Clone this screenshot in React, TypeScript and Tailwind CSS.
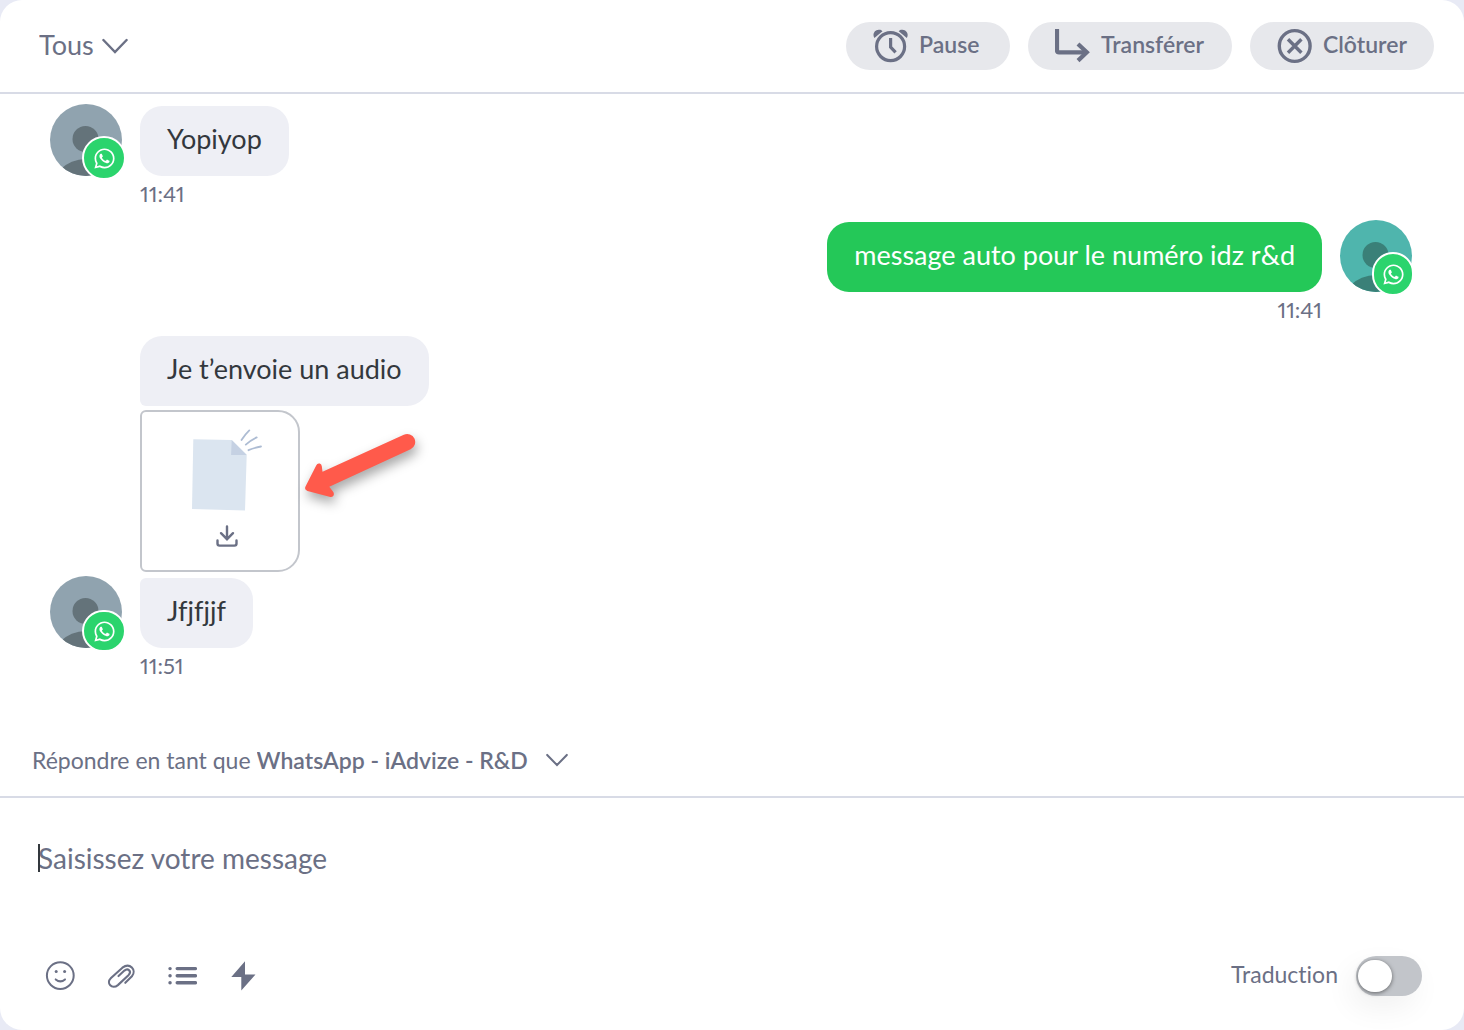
import type { ReactNode } from "react"
import { FaWhatsapp } from "react-icons/fa"

const actions = [
  { label: "Pause", icon: <AlarmIcon />, width: "w-[164px]" },
  { label: "Transférer", icon: <TransferIcon />, width: "w-[204px]" },
  { label: "Clôturer", icon: <CloseIcon />, width: "w-[184px]" },
]

const tools = [
  { label: "Emoji", icon: <SmileIcon /> },
  { label: "Pièce jointe", icon: <PaperclipIcon /> },
  { label: "Réponses", icon: <ListIcon /> },
  { label: "Raccourcis", icon: <BoltIcon /> },
]

function AlarmIcon() {
  return (
    <svg className="size-9 shrink-0" viewBox="0 0 36 36" fill="none" stroke="currentColor" strokeWidth="3.2">
      <circle cx="17.6" cy="18.6" r="14" />
      <path d="M17.6 10v9l5 5.3" />
      <path
        d="M1.4 9.9C-.9 6.3 1.4 2 5.7 1.8c1.8-.2 3.2.4 3.8 1.5zM33.8 9.9c2.2-3.6 0-7.9-4.3-8.1-1.8-.2-3.2.4-3.8 1.5z"
        fill="currentColor"
        stroke="none"
      />
    </svg>
  )
}

function TransferIcon() {
  return (
    <svg className="size-9 shrink-0" viewBox="2 0 36 36" fill="none" stroke="currentColor" strokeWidth="4.2">
      <path d="M4 1v21.3q0 2 2 2h28" />
      <path d="M25 16l8.8 8.3-8.8 8.3" />
    </svg>
  )
}

function CloseIcon() {
  return (
    <svg className="size-9 shrink-0" viewBox="0 0 36 36" fill="none" stroke="currentColor" strokeWidth="3.4">
      <circle cx="17.7" cy="18" r="15.4" />
      <path d="M11 11.2l13.4 13.6M24.4 11.2L11 24.8" />
    </svg>
  )
}

function SmileIcon() {
  return (
    <svg className="size-[30px]" viewBox="0 0 30 30" fill="none" stroke="currentColor" strokeWidth="2">
      <circle cx="15.3" cy="14.6" r="13.4" />
      <path d="M10.7 18.4q4.7 4 9.3 0" strokeLinecap="round" />
      <circle cx="11.2" cy="10.6" r="1.5" fill="currentColor" stroke="none" />
      <circle cx="19.6" cy="10.6" r="1.5" fill="currentColor" stroke="none" />
    </svg>
  )
}

function PaperclipIcon() {
  return (
    <svg className="size-[30px]" viewBox="0 0 30 30" fill="none" stroke="currentColor" strokeWidth="2.1" strokeLinecap="round">
      <path d="M19.3 21.8l6.6-6.5c5.1-6-2-14.4-9.5-8.6L5 16.9c-5.4 5.4 1.1 12 6.9 7.2l10.8-10.2c3.3-3.7-.8-7.3-4.3-4.3l-5.9 5.5" />
    </svg>
  )
}

function ListIcon() {
  return (
    <svg className="size-[30px]" viewBox="0 0 30 30" fill="none" stroke="currentColor" strokeWidth="3.4" strokeLinecap="round">
      <path d="M10.2 7.6h18.2M10.2 14.7h18.2M10.2 21.8h18.2M3 7.6h.1M3 14.7h.1M3 21.8h.1" />
    </svg>
  )
}

function BoltIcon() {
  return (
    <svg className="size-[30px]" viewBox="0 0 30 30" fill="currentColor">
      <path d="M17 .3L3.3 16h10v13.5L27.5 13.4H17z" />
    </svg>
  )
}

function DownloadIcon() {
  return (
    <svg className="size-[22px]" viewBox="0 0 22 22" fill="none" stroke="currentColor" strokeWidth="2.4" strokeLinecap="round">
      <path d="M11 1.4v12.2M5 8.2l6 6 6-6M1.5 15.4v3.2q0 2 2 2h15q2 0 2-2v-3.2" />
    </svg>
  )
}

function FileIcon() {
  return (
    <svg className="h-[84px] w-[74px]" viewBox="190 428 74 84">
      <path d="M193.3 439.2l38.4.8 15 14.8-1.7 55.7-53-1.5z" fill="#dbe5f0" />
      <path d="M231.7 440l15 15h-15.6z" fill="#c5d1e3" />
      <path
        d="M241.5 440q3.6-5.6 7.8-9.6M245.8 444.6q5-4.4 10.9-7.2M248.5 450.2q6-2.6 12.5-3.7"
        fill="none"
        stroke="#adbcd3"
        strokeWidth="1.8"
        strokeLinecap="round"
      />
    </svg>
  )
}

function RedArrow() {
  return (
    <svg className="absolute left-40 top-[15px] h-[90px] w-[130px] drop-shadow-[2px_6px_6px_rgba(0,0,0,0.35)]" viewBox="0 0 130 90">
      <path
        d="M5.5 61.5L16.2 40.5Q17.2 38 19.8 38.6Q21.6 39 21.8 41.3L22.5 46.8L103.8 9.7A8 8 0 0 1 110.6 24.2L29.3 61.8L33.3 67Q34.6 69.6 33 71.2Q31.8 72.4 29.4 71.8L7.5 66Q4 64.8 5.5 61.5Z"
        fill="#ff5a4b"
      />
    </svg>
  )
}

function Chevron({ className }: { className: string }) {
  return (
    <svg
      className={`pointer-events-none absolute right-0 ${className}`}
      viewBox="0 0 26 16"
      fill="none"
      stroke="currentColor"
      strokeWidth="2.4"
      strokeLinecap="round"
    >
      <path d="M1.4 2L13 14 24.6 2" />
    </svg>
  )
}

type AvatarProps = { color: string; shade: string; badge: string }

function Avatar({ color, shade, badge }: AvatarProps) {
  return (
    <div className="relative size-[72px] shrink-0">
      <div className={`size-[72px] overflow-hidden rounded-full ${color}`}>
        <svg className={shade} viewBox="0 0 72 72" fill="currentColor">
          <circle cx="35.5" cy="35" r="13" />
          <circle cx="36" cy="92" r="37" />
        </svg>
      </div>
      <span
        className={`absolute flex items-center justify-center rounded-full border-2 border-white bg-[#2bd46d] text-white ${badge}`}
      >
        <FaWhatsapp className="size-[23px]" />
      </span>
    </div>
  )
}

function Visitor({ badge }: { badge: string }) {
  return <Avatar color="bg-[#90a3af]" shade="text-[#64737a]" badge={badge} />
}

function Bubble({ className, children }: { className: string; children: ReactNode }) {
  return <p className={`flex h-[70px] items-center px-[27px] pb-1 text-[27px] ${className}`}>{children}</p>
}

function Time({ className, children }: { className: string; children: ReactNode }) {
  return <time className={`block text-[22px] leading-9 proportional-nums ${className}`}>{children}</time>
}

export default function App() {
  return (
    <div className="min-h-screen bg-[#e8eaf5] font-[Lato,sans-serif] text-[#6b7085] [font-variant-ligatures:none]">
      <main className="flex min-h-screen flex-col rounded-[22px] bg-white">
        {/* Header */}
        <header className="flex items-center justify-between border-b-2 border-[#d8dbe6] py-[22px] pl-[39px] pr-[30px]">
          <label className="relative flex items-center">
            <select aria-label="Filtre" className="field-sizing-content cursor-pointer appearance-none bg-transparent pb-0.5 pr-[34px] text-[27px]">
              <option>Tous</option>
            </select>
            <Chevron className="h-4 w-[26px]" />
          </label>
          <div className="flex gap-[18px]">
            {actions.map((action) => (
              <button
                key={action.label}
                className={`flex h-12 cursor-pointer items-center gap-2.5 rounded-full bg-[#e7e8ec] pl-[27px] text-[23px] font-semibold ${action.width}`}
              >
                {action.icon}
                <span className="pb-1">{action.label}</span>
              </button>
            ))}
          </div>
        </header>

        {/* Conversation */}
        <section className="flex flex-1 flex-col gap-2 pl-[50px] pr-[52px] pt-2.5">
          <div>
            <div className="flex items-end gap-[18px]">
              <Visitor badge="left-8 top-8 size-11" />
              <Bubble className="rounded-[22px] bg-[#eeeff5] text-[#33383d]">Yopiyop</Bubble>
            </div>
            <Time className="pl-[90px]">11:41</Time>
          </div>

          <div>
            <div className="flex items-end justify-end gap-[18px]">
              <Bubble className="rounded-[22px] bg-[#24c858] text-white">message auto pour le numéro idz r&d</Bubble>
              <Avatar color="bg-[#4fb5ad]" shade="text-[#3a8078]" badge="left-8 top-8 h-11 w-[42px]" />
            </div>
            <Time className="pr-[90px] text-right">11:41</Time>
          </div>

          <div>
            <div className="flex items-end gap-[18px]">
              <Visitor badge="left-8 top-[34px] h-[42px] w-11" />
              <div className="flex flex-col items-start">
                <Bubble className="rounded-[22px] rounded-bl-md bg-[#eeeff5] text-[#33383d]">Je t’envoie un audio</Bubble>
                <div className="relative mb-1.5 mt-1">
                  <a
                    href="#audio"
                    aria-label="Télécharger le fichier"
                    className="flex h-[162px] w-40 flex-col items-center gap-[13px] rounded-l-md rounded-r-[22px] border-2 border-[#c3c6cc] pl-3.5 pt-4"
                  >
                    <FileIcon />
                    <DownloadIcon />
                  </a>
                  <RedArrow />
                </div>
                <Bubble className="rounded-[22px] rounded-tl-md bg-[#eeeff5] text-[#33383d]">Jfjfjjf</Bubble>
              </div>
            </div>
            <Time className="pl-[90px]">11:51</Time>
          </div>
        </section>

        {/* Reply channel */}
        <div className="flex h-[74px] items-center gap-1.5 border-b-2 border-[#d8dbe6] pl-8 text-[23px]">
          <label htmlFor="channel">Répondre en tant que</label>
          <div className="relative flex items-center">
            <select id="channel" className="field-sizing-content cursor-pointer appearance-none bg-transparent pr-10 font-semibold">
              <option>WhatsApp - iAdvize - R&D</option>
            </select>
            <Chevron className="h-3.5 w-[22px]" />
          </div>
        </div>

        {/* Composer */}
        <div className="flex h-[232px] flex-col justify-between pb-[34px] pt-11">
          <div className="relative px-[38px]">
            <textarea
              aria-label="Message"
              rows={1}
              placeholder="Saisissez votre message"
              className="block w-full resize-none overflow-hidden text-[28px] leading-8 outline-none placeholder:text-[#6b7085]"
            />
            <span className="absolute left-[38px] top-0.5 h-7 w-0.5 bg-[#33383d]" />
          </div>
          <div className="flex items-center justify-between pl-[45px] pr-[42px]">
            <div className="flex gap-[31px]">
              {tools.map((tool) => (
                <button key={tool.label} aria-label={tool.label} className="cursor-pointer">
                  {tool.icon}
                </button>
              ))}
            </div>
            <label className="flex items-center gap-[18px] text-[23px]">
              <span className="pb-1">Traduction</span>
              <input
                type="checkbox"
                role="switch"
                className="h-10 w-[66px] cursor-pointer appearance-none rounded-full bg-[#c2c5ca] pl-0.5 pt-1 shadow-[-6px_12px_30px_rgba(0,0,0,0.06)] before:block before:h-8 before:w-[34px] before:rounded-full before:bg-white before:shadow-[0_1px_4px_rgba(0,0,0,0.5)]"
              />
            </label>
          </div>
        </div>
      </main>
    </div>
  )
}
